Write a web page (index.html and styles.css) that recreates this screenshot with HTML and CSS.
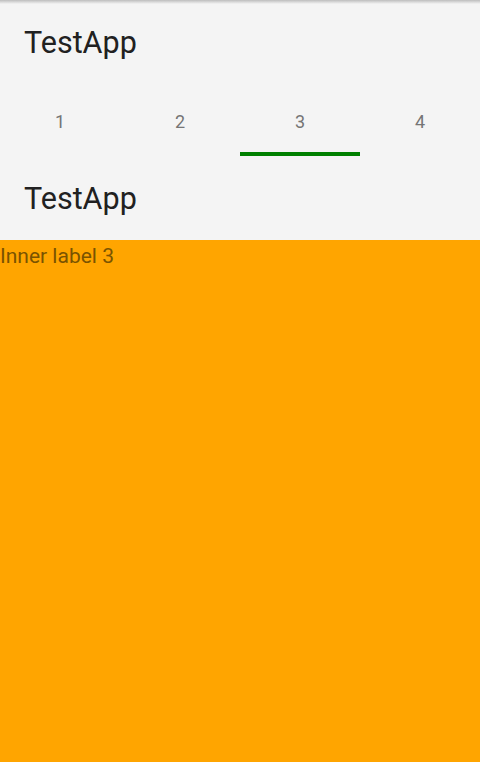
FILE: index.html
```html
<!DOCTYPE html>
<html>
<head>
<meta charset="utf-8">
<link rel="stylesheet" href="styles.css">
</head>
<body>
<div class="app">
  <header class="toolbar"><span class="title">TestApp</span></header>
  <nav class="tabs">
    <div class="tab">1</div>
    <div class="tab">2</div>
    <div class="tab active">3</div>
    <div class="tab">4</div>
  </nav>
  <header class="toolbar inner"><span class="title">TestApp</span></header>
  <main class="content"><span class="label">Inner label 3</span></main>
</div>
</body>
</html>
```
FILE: styles.css
```css
html, body {
  margin: 0;
  padding: 0;
  height: 100%;
}
body {
  font-family: Roboto, "Noto Sans", sans-serif;
  background: #f4f4f4;
}
.app {
  display: flex;
  flex-direction: column;
  height: 100%;
  position: relative;
}
.app::before {
  content: "";
  position: absolute;
  left: 0;
  right: 0;
  top: 0;
  height: 4px;
  background: linear-gradient(#bdbdbd, rgba(244,244,244,0));
}
.toolbar {
  height: 84px;
  display: flex;
  align-items: center;
  padding: 2px 24px 0;
  background: #f4f4f4;
  flex: none;
  box-sizing: border-box;
}
.title {
  font-size: 30.5px;
  color: #212121;
  line-height: 1;
}
.tabs {
  display: flex;
  height: 72px;
  flex: none;
}
.tab {
  flex: 1;
  display: flex;
  align-items: center;
  justify-content: center;
  font-size: 18px;
  color: #757575;
  padding-top: 2px;
  box-sizing: border-box;
}
.tab.active {
  border-bottom: 4px solid #008000;
  padding-top: 6px;
}
.content {
  flex: 1;
  background: #ffa500;
}
.label {
  font-size: 21px;
  color: #7a5300;
  line-height: 32px;
}
```
